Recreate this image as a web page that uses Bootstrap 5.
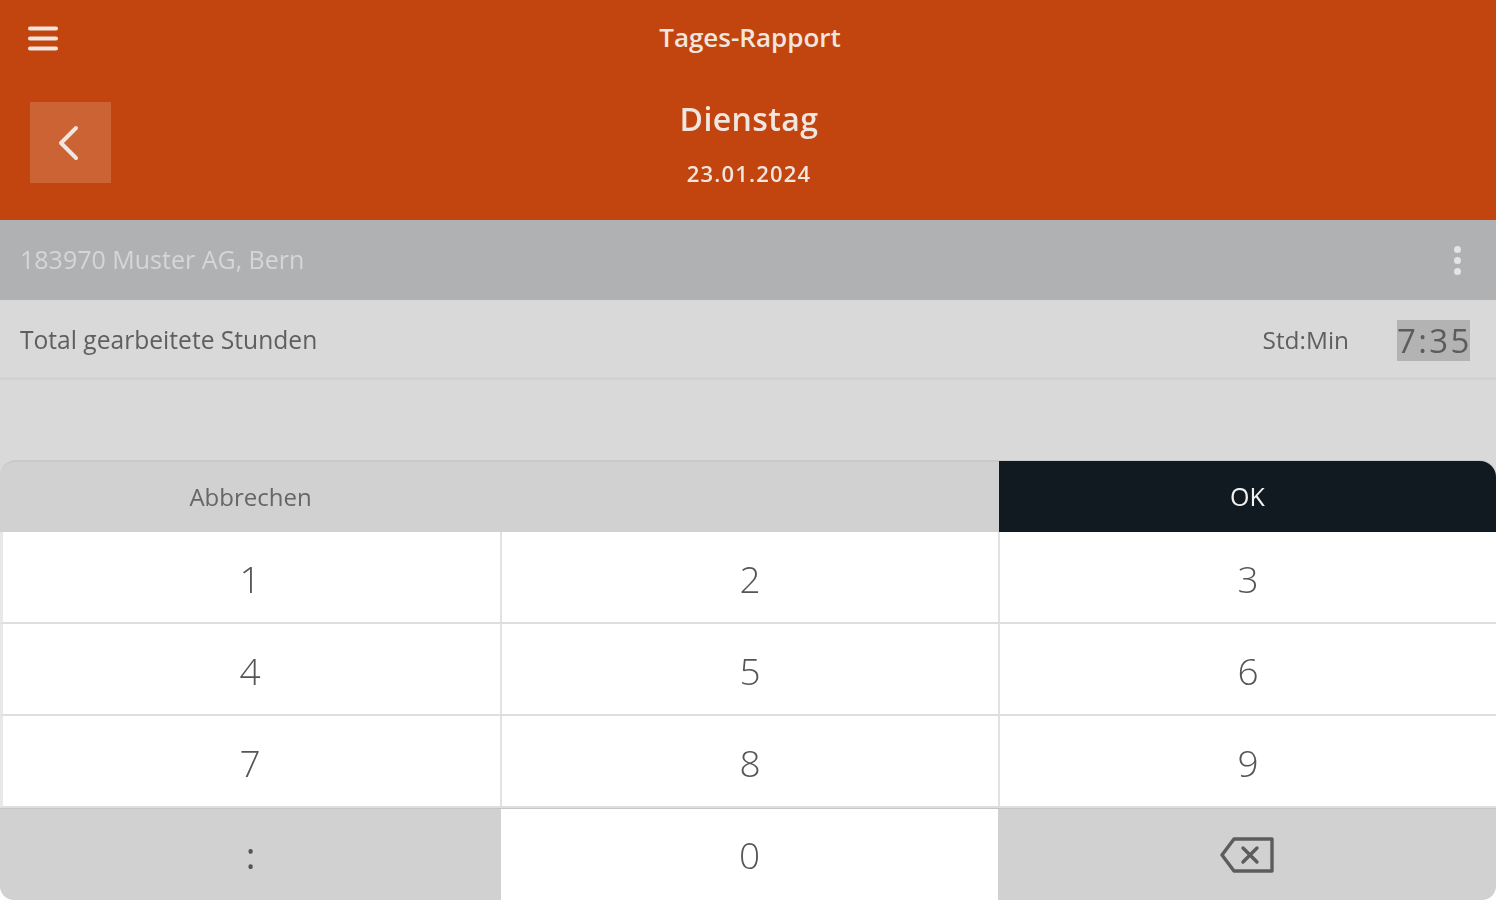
<!DOCTYPE html>
<html lang="de">
<head>
<meta charset="utf-8">
<title>Tages-Rapport</title>
<link rel="stylesheet" href="https://cdn.jsdelivr.net/npm/bootstrap@5.3.0/dist/css/bootstrap.min.css">
<style>
html,body{height:900px;overflow:hidden}
body{font-family:"Open Sans","Liberation Sans",sans-serif;background:#d9d9d9;color:#555}
.app-shell{height:900px;filter:blur(.7px)}
.app-head{height:220px;background:#c2450f;color:#f1e6df}
.head-top{height:76px;padding-left:28px}
.head-title{font-size:26px;font-weight:600;line-height:1;margin-top:-2px}
.burger{width:30px;height:27px}
.head-main{height:144px;padding-left:30px}
.back-box{width:81px;height:81px;background:#cb6334;margin-top:26px}
.back-box svg{margin-right:6px}
.day-block{width:1276px;text-align:center}
.day-name{font-size:32px;line-height:1;margin-top:27px;font-weight:600;letter-spacing:.4px}
.day-date{font-size:22px;line-height:1;margin-top:27px;font-weight:600;letter-spacing:1.2px}
.cust-bar{height:80px;background:#b0b1b3;color:#d5d6d7;font-size:25px;padding:0 35px 0 20px}
.dots i{display:block;width:7px;height:7px;border-radius:50%;background:#e4e4e5;margin:4px 0}
.total-row{height:80px;background:#d9d9d9;border-bottom:3px solid #d2d2d2;font-size:24.6px;color:#5f5f5f;padding:0 26px 0 20px}
.total-label,.unit{margin-top:3px}
.unit{margin-right:48px;font-size:24.4px}
.time-val{background:#b3b3b3;color:#5c5c5c;font-size:33px;line-height:41px;width:73px;text-align:center;letter-spacing:2.4px;white-space:nowrap;margin-top:3px}
.gap-zone{height:80px}
.keypad{height:440px;background:#d9d9d9}
.pad-top{height:72px;background:#d1d1d1;border-top:2px solid #c9c9c9;border-top-left-radius:16px;border-top-right-radius:16px}
.pad-top>div,.pad-row>div{display:flex;align-items:center;justify-content:center}
.cell-a{width:499px;padding:3px 3px 0 0}
.cell-b{width:498px;padding-top:3px}
.cell-c{flex:1;padding-top:3px}
.pad-cancel{font-size:24px;color:#666;flex:0 0 999px;padding-right:498px}
.pad-ok{flex:1;background:#111a21;color:#f2f2f2;font-size:25px;border-top-right-radius:16px;margin-top:-1px}
.pad-row{height:92px;background:#fff;border-left:3px solid #e8e8e8;border-bottom:2px solid #dedede;font-size:37px;color:#555;font-weight:300}
.pad-row .cell-a,.pad-row .cell-b{border-right:2px solid #e2e2e2}
.pad-row.last{border:0;border-top:1px solid #c6c6c6;background:#fff}
.last .side{background:#d1d1d1}
.pad-row.last>div{padding:0}
.last .cell-a.side{width:501px;border-right:0;border-bottom-left-radius:14px}
.last .cell-c.side{border-bottom-right-radius:14px}
.last .cell-b{width:497px;border-right:0}
.colon-mark{font-weight:400}
</style>
</head>
<body>
<div class="app-shell d-flex flex-column">
  <header class="app-head">
    <div class="head-top d-flex align-items-center">
      <svg class="burger flex-shrink-0" viewBox="0 0 30 27" fill="none" stroke="#f1e6df" stroke-width="4" stroke-linecap="round" aria-hidden="true"><path d="M2 3.5H28M2 13.5H28M2 23.5H28"/></svg>
      <div class="head-title flex-grow-1 text-center">Tages-Rapport</div>
      <div class="burger flex-shrink-0 me-4"></div>
    </div>
    <div class="head-main d-flex">
      <div class="back-box flex-shrink-0 d-flex align-items-center justify-content-center">
        <svg width="24" height="36" viewBox="0 0 24 36" fill="none" stroke="#f1e6df" stroke-width="4" stroke-linecap="round" stroke-linejoin="round" aria-hidden="true"><path d="M20 3 5 18l15 15"/></svg>
      </div>
      <div class="day-block">
        <div class="day-name">Dienstag</div>
        <div class="day-date">23.01.2024</div>
      </div>
    </div>
  </header>
  <div class="cust-bar d-flex align-items-center justify-content-between">
    <span>183970 Muster AG, Bern</span>
    <span class="dots"><i></i><i></i><i></i></span>
  </div>
  <div class="total-row d-flex align-items-center">
    <span class="me-auto total-label">Total gearbeitete Stunden</span>
    <span class="unit">Std:Min</span>
    <span class="time-val">7:35</span>
  </div>
  <div class="gap-zone"></div>
  <div class="keypad d-flex flex-column">
    <div class="pad-top d-flex">
      <div class="pad-cancel">Abbrechen</div>
      <div class="pad-ok">OK</div>
    </div>
    <div class="pad-row d-flex"><div class="cell-a">1</div><div class="cell-b">2</div><div class="cell-c">3</div></div>
    <div class="pad-row d-flex"><div class="cell-a">4</div><div class="cell-b">5</div><div class="cell-c">6</div></div>
    <div class="pad-row d-flex"><div class="cell-a">7</div><div class="cell-b">8</div><div class="cell-c">9</div></div>
    <div class="pad-row last d-flex">
      <div class="cell-a side"><span class="colon-mark">:</span></div>
      <div class="cell-b">0</div>
      <div class="cell-c side">
        <svg width="56" height="38" viewBox="0 0 56 38" fill="none" stroke="#5c5c5c" stroke-width="3.4" stroke-linejoin="round" stroke-linecap="round" aria-hidden="true"><path d="M15 3H53V35H15L3 19Z"/><path d="M24 12 38 26M38 12 24 26"/></svg>
      </div>
    </div>
  </div>
</div>
<script src="https://cdn.jsdelivr.net/npm/bootstrap@5.3.0/dist/js/bootstrap.bundle.min.js"></script>
</body>
</html>
